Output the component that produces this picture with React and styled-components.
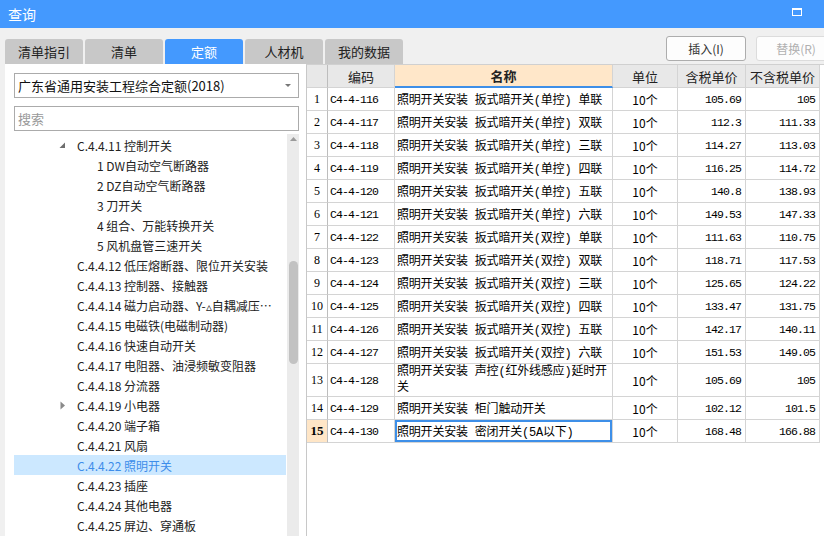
import React from "react";
import styled, { createGlobalStyle, css } from "styled-components";

const GlobalStyle = createGlobalStyle`
  body {
    margin: 0;
    background: #f0f0f0;
    font-family: "Noto Sans CJK SC", "Noto Sans", sans-serif;
  }
`;

const CJK = `"Noto Sans CJK SC", "Noto Sans", sans-serif`;
const MONO = `"Liberation Mono", "Noto Sans CJK SC", monospace`;

const treeItems = [
  { level: 1, text: "C.4.4.11 控制开关", arrow: "open" },
  { level: 2, text: "1 DW自动空气断路器" },
  { level: 2, text: "2 DZ自动空气断路器" },
  { level: 2, text: "3 刀开关" },
  { level: 2, text: "4 组合、万能转换开关" },
  { level: 2, text: "5 风机盘管三速开关" },
  { level: 1, text: "C.4.4.12 低压熔断器、限位开关安装" },
  { level: 1, text: "C.4.4.13 控制器、接触器" },
  { level: 1, text: "C.4.4.14 磁力启动器、Y-▵自耦减压启动器" },
  { level: 1, text: "C.4.4.15 电磁铁(电磁制动器)" },
  { level: 1, text: "C.4.4.16 快速自动开关" },
  { level: 1, text: "C.4.4.17 电阻器、油浸频敏变阻器" },
  { level: 1, text: "C.4.4.18 分流器" },
  { level: 1, text: "C.4.4.19 小电器", arrow: "closed" },
  { level: 1, text: "C.4.4.20 端子箱" },
  { level: 1, text: "C.4.4.21 风扇" },
  { level: 1, text: "C.4.4.22 照明开关", selected: true },
  { level: 1, text: "C.4.4.23 插座" },
  { level: 1, text: "C.4.4.24 其他电器" },
  { level: 1, text: "C.4.4.25 屏边、穿通板" },
];

const rows = [
  ["C4-4-116", "照明开关安装 扳式暗开关(单控) 单联", "105.69", "105"],
  ["C4-4-117", "照明开关安装 扳式暗开关(单控) 双联", "112.3", "111.33"],
  ["C4-4-118", "照明开关安装 扳式暗开关(单控) 三联", "114.27", "113.03"],
  ["C4-4-119", "照明开关安装 扳式暗开关(单控) 四联", "116.25", "114.72"],
  ["C4-4-120", "照明开关安装 扳式暗开关(单控) 五联", "140.8", "138.93"],
  ["C4-4-121", "照明开关安装 扳式暗开关(单控) 六联", "149.53", "147.33"],
  ["C4-4-122", "照明开关安装 扳式暗开关(双控) 单联", "111.63", "110.75"],
  ["C4-4-123", "照明开关安装 扳式暗开关(双控) 双联", "118.71", "117.53"],
  ["C4-4-124", "照明开关安装 扳式暗开关(双控) 三联", "125.65", "124.22"],
  ["C4-4-125", "照明开关安装 扳式暗开关(双控) 四联", "133.47", "131.75"],
  ["C4-4-126", "照明开关安装 扳式暗开关(双控) 五联", "142.17", "140.11"],
  ["C4-4-127", "照明开关安装 扳式暗开关(双控) 六联", "151.53", "149.05"],
  ["C4-4-128", ["照明开关安装 声控(红外线感应)延时开", "关"], "105.69", "105"],
  ["C4-4-129", "照明开关安装 柜门触动开关", "102.12", "101.5"],
  ["C4-4-130", "照明开关安装 密闭开关(5A以下)", "168.48", "166.88"],
];

const tabs = ["清单指引", "清单", "定额", "人材机", "我的数据"];

export default function App() {
  return (
    <>
      <GlobalStyle />
      <Window>
        <TitleBar>
          <Title>查询</Title>
          <svg width="10" height="8" viewBox="0 0 10 8">
            <rect x="0.5" y="1" width="9" height="6.5" fill="none" stroke="#fff" strokeWidth="1" />
            <rect x="0" y="0" width="10" height="2" fill="#fff" />
          </svg>
        </TitleBar>

        <Toolbar>
          <Tabs>
            {tabs.map((t) => (
              <Tab key={t} $active={t === "定额"}>{t}</Tab>
            ))}
          </Tabs>
          <Buttons>
            <ActionButton>插入(I)</ActionButton>
            <ActionButton $disabled>替换(R)</ActionButton>
          </Buttons>
        </Toolbar>

        <Body>
          <LeftPanel>
            <Select>
              <span>广东省通用安装工程综合定额(2018)</span>
              <Caret />
            </Select>
            <Search placeholder="搜索" />
            <TreeArea>
              <TreeList>
                {treeItems.map((item) => (
                  <TreeItem key={item.text} $selected={item.selected}>
                    <ArrowSlot $level={item.level}>
                      {item.arrow === "open" && (
                        <svg width="7" height="7" viewBox="0 0 7 7">
                          <path d="M6 0.5 L6 6 L0.5 6 Z" fill="#6e6e6e" />
                        </svg>
                      )}
                      {item.arrow === "closed" && (
                        <svg width="6" height="9" viewBox="0 0 6 9">
                          <path d="M0.5 0.5 L5 4.5 L0.5 8.5 Z" fill="#8a8a8a" />
                        </svg>
                      )}
                    </ArrowSlot>
                    <TreeText>{item.text}</TreeText>
                  </TreeItem>
                ))}
              </TreeList>
              <ScrollTrack>
                <svg width="9" height="6" viewBox="0 0 9 6">
                  <path d="M4.5 1 L8 5 L1 5 Z" fill="#9a9a9a" />
                </svg>
                <ScrollThumb />
              </ScrollTrack>
            </TreeArea>
          </LeftPanel>

          <RightPanel>
            <Grid>
              <Row>
                <HeadCell />
                <HeadCell>编码</HeadCell>
                <HeadCell $focus>名称</HeadCell>
                <HeadCell>单位</HeadCell>
                <HeadCell>含税单价</HeadCell>
                <HeadCell>不含税单价</HeadCell>
              </Row>
              {rows.map(([code, name, tax, noTax], i) => {
                const current = i === rows.length - 1;
                const lines = Array.isArray(name) ? name : [name];
                return (
                  <Row key={code} $tall={lines.length > 1}>
                    <NumCell $current={current}>{i + 1}</NumCell>
                    <CodeCell>{code}</CodeCell>
                    <NameCell $current={current} $tall={lines.length > 1}>
                      {lines.map((l) => (
                        <span key={l}>{l}</span>
                      ))}
                    </NameCell>
                    <UnitCell>10个</UnitCell>
                    <PriceCell>{tax}</PriceCell>
                    <PriceCell>{noTax}</PriceCell>
                  </Row>
                );
              })}
            </Grid>
          </RightPanel>
        </Body>
      </Window>
    </>
  );
}

const Window = styled.div`
  width: 824px;
  height: 536px;
  display: flex;
  flex-direction: column;
  overflow: hidden;
  background: #f0f0f0;
`;

const TitleBar = styled.div`
  height: 28px;
  flex: none;
  background: #4499fe;
  display: flex;
  align-items: center;
  justify-content: space-between;
  padding: 0 22px 0 8px;
  svg {
    margin-top: -4px;
  }
`;

const Title = styled.div`
  color: #fff;
  font-size: 14px;
  font-family: ${CJK};
`;

const Toolbar = styled.div`
  height: 36px;
  flex: none;
  display: flex;
  align-items: flex-end;
  padding-left: 5px;
`;

const Tabs = styled.div`
  display: flex;
  gap: 2px;
`;

const Tab = styled.div`
  width: 78px;
  height: 25px;
  box-sizing: border-box;
  border-radius: 3px 3px 0 0;
  background: ${(p) => (p.$active ? "#4499fe" : "#c8c8c8")};
  color: ${(p) => (p.$active ? "#fff" : "#222")};
  font-size: 13px;
  font-family: ${CJK};
  display: flex;
  align-items: center;
  justify-content: center;
`;

const Buttons = styled.div`
  margin-left: auto;
  margin-right: -12px;
  align-self: flex-start;
  margin-top: 8px;
  display: flex;
  gap: 10px;
`;

const ActionButton = styled.div`
  width: 80px;
  height: 25px;
  box-sizing: border-box;
  border-radius: 3px;
  border: 1px solid ${(p) => (p.$disabled ? "#dcdcdc" : "#adadad")};
  background: #fdfdfd;
  color: ${(p) => (p.$disabled ? "#b0b0b0" : "#333")};
  font-size: 12px;
  font-family: ${CJK};
  display: flex;
  align-items: center;
  justify-content: center;
`;

const Body = styled.div`
  flex: 1;
  display: flex;
  padding-left: 5px;
  min-height: 0;
`;

const LeftPanel = styled.div`
  width: 301px;
  flex: none;
  background: #fff;
  box-sizing: border-box;
  padding: 9px 7px 0 9px;
  display: flex;
  flex-direction: column;
  min-height: 0;
`;

const fieldBox = css`
  height: 25px;
  box-sizing: border-box;
  border: 1px solid #ababab;
  background: #fff;
  font-size: 13px;
  font-family: ${CJK};
  padding: 0 3px;
`;

const Select = styled.div`
  ${fieldBox};
  display: flex;
  align-items: center;
  justify-content: space-between;
  color: #111;
`;

const Caret = styled.span`
  width: 0;
  height: 0;
  margin-right: 4px;
  border-left: 3px solid transparent;
  border-right: 3px solid transparent;
  border-top: 3px solid #777;
`;

const Search = styled.input`
  ${fieldBox};
  margin-top: 8px;
  outline: none;
  width: 100%;
  &::placeholder {
    color: #999;
  }
`;

const TreeArea = styled.div`
  flex: 1;
  margin-top: 3px;
  display: flex;
  min-height: 0;
  overflow: hidden;
`;

const TreeList = styled.div`
  width: 272px;
  flex: none;
  padding-top: 1px;
`;

const TreeItem = styled.div`
  height: 20px;
  display: flex;
  align-items: center;
  font-size: 12px;
  font-family: ${CJK};
  color: ${(p) => (p.$selected ? "#3d8dea" : "#222")};
  background: ${(p) => (p.$selected ? "#cce8ff" : "transparent")};
  padding-right: 10px;
  overflow: hidden;
`;

const ArrowSlot = styled.div`
  width: ${(p) => (p.$level === 1 ? 63 : 83)}px;
  flex: none;
  display: flex;
  justify-content: flex-end;
  padding-right: ${(p) => (p.$level === 1 ? 11 : 0)}px;
  box-sizing: border-box;
`;

const TreeText = styled.span`
  white-space: nowrap;
  overflow: hidden;
  text-overflow: ellipsis;
`;

const ScrollTrack = styled.div`
  width: 12px;
  margin-left: 1px;
  background: #ebebeb;
  display: flex;
  flex-direction: column;
  align-items: center;
  padding-top: 2px;
`;

const ScrollThumb = styled.div`
  width: 9px;
  height: 103px;
  margin-top: 119px;
  border-radius: 5px;
  background: #c2c2c2;
`;

const RightPanel = styled.div`
  flex: 1;
  background: #fff;
  border-left: 1px solid #c8c8c8;
  border-top: 1px solid #d0d0d0;
`;

const Grid = styled.div`
  display: flex;
  flex-direction: column;
  width: 513px;
`;

const Row = styled.div`
  display: grid;
  grid-template-columns: 21px 67px 218px 65px 68px 74px;
  height: ${(p) => (p.$tall ? 33 : 23)}px;
`;

const cellBase = css`
  box-sizing: border-box;
  border-right: 1px solid #d4d4d4;
  border-bottom: 1px solid #d4d4d4;
  display: flex;
  align-items: center;
  overflow: hidden;
  white-space: nowrap;
  color: #000;
`;

const monoText = css`
  font-family: ${MONO};
  font-size: 11.5px;
  letter-spacing: -0.9px;
`;

const HeadCell = styled.div`
  ${cellBase};
  justify-content: center;
  font-size: 13px;
  font-family: ${CJK};
  color: #222;
  background: ${(p) => (p.$focus ? "#ffe7c9" : "#e8e8e8")};
  font-weight: ${(p) => (p.$focus ? 700 : 400)};
  ${(p) => p.$focus && "border-bottom: 2px solid #3d8fe8;"}
  &:first-child {
    border-right-color: #bdbdbd;
  }
`;

const NumCell = styled.div`
  ${cellBase};
  justify-content: center;
  font-family: "Liberation Serif", serif;
  border-right-color: #bdbdbd;
  background: ${(p) => (p.$current ? "#ffe6c7" : "#fff")};
  font-weight: ${(p) => (p.$current ? 700 : 400)};
  font-size: ${(p) => (p.$current ? 13 : 12)}px;
`;

const CodeCell = styled.div`
  ${cellBase};
  ${monoText};
  padding-left: 2px;
`;

const NameCell = styled.div`
  ${cellBase};
  padding-left: 2px;
  font-family: "Liberation Mono", ${CJK};
  font-size: 12px;
  letter-spacing: -0.2px;
  flex-direction: column;
  align-items: flex-start;
  justify-content: ${(p) => (p.$tall ? "flex-start" : "center")};
  line-height: ${(p) => (p.$tall ? "16px" : "normal")};
  ${(p) => p.$current && "box-shadow: inset 0 0 0 2px #3d8fe8;"}
`;

const UnitCell = styled.div`
  ${cellBase};
  justify-content: center;
  font-family: ${CJK};
  font-size: 12px;
`;

const PriceCell = styled.div`
  ${cellBase};
  ${monoText};
  justify-content: flex-end;
  padding-right: 4px;
`;
